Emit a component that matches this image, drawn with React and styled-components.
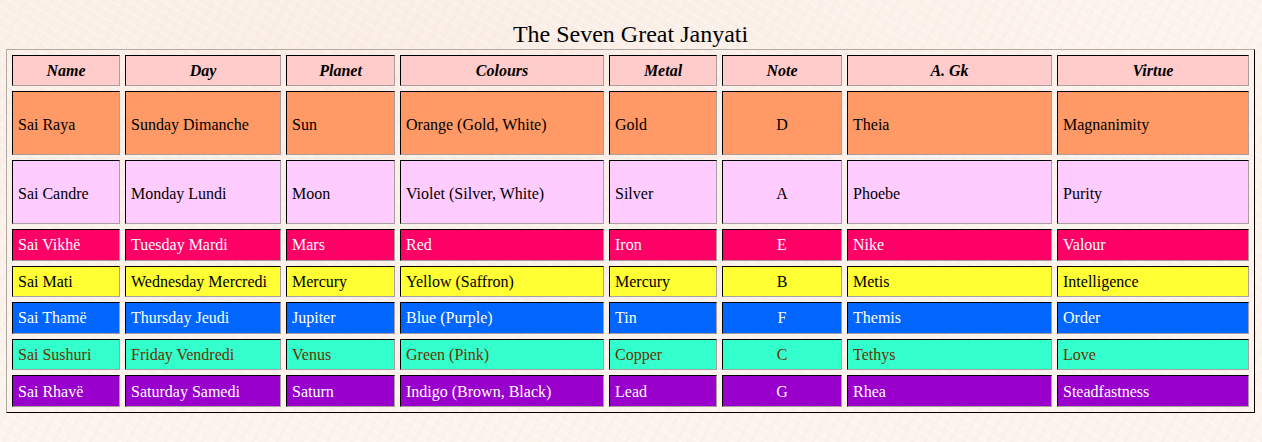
import React from "react";
import styled, { createGlobalStyle } from "styled-components";

const GlobalStyle = createGlobalStyle`
  html, body {
    margin: 0;
    padding: 0;
  }
  body {
    font-family: "Liberation Serif", "Times New Roman", serif;
    color: #000;
    background-color: #fcf3ec;
    background-image:
      repeating-linear-gradient(118deg, rgba(240, 214, 200, 0.09) 0 3px, transparent 3px 11px),
      repeating-linear-gradient(32deg, rgba(255, 255, 255, 0.25) 0 2px, transparent 2px 9px),
      radial-gradient(ellipse at 30% 20%, rgba(245, 225, 214, 0.35), transparent 60%);
    min-height: 442px;
  }
  * {
    box-sizing: border-box;
  }
`;

const Page = styled.div`
  padding: 20px 7px 0 6px;
`;

const Title = styled.h2`
  margin: 0 0 1px;
  font-size: 24px;
  font-weight: normal;
  line-height: 28px;
  text-align: center;
`;

const Table = styled.table`
  width: 100%;
  table-layout: fixed;
  border-collapse: separate;
  border-spacing: 5px;
  border: 1px solid;
  border-color: #b4aaa4 #000 #000 #b4aaa4;
`;

const HeadCell = styled.th`
  width: ${(p) => p.$w}px;
  height: 31px;
  padding: 1px 5px 0;
  background: #ffcccc;
  border: 1px solid;
  border-color: #000 #a8a0a0 #a8a0a0 #000;
  font-size: 16px;
  font-weight: bold;
  font-style: italic;
  text-align: center;
  vertical-align: middle;
`;

const Cell = styled.td`
  height: ${(p) => (p.$tall ? 64 : 31.6)}px;
  padding: ${(p) => (p.$tall ? "3px 5px 0" : "1px 5px 0")};
  background: ${(p) => p.$bg};
  color: ${(p) => p.$fg};
  border: 1px solid;
  border-color: #000 #a8a0a0 #a8a0a0 #000;
  font-size: 16px;
  text-align: ${(p) => (p.$center ? "center" : "left")};
  vertical-align: middle;
  white-space: nowrap;
`;

const columns = [
  { label: "Name", w: 108 },
  { label: "Day", w: 156 },
  { label: "Planet", w: 109 },
  { label: "Colours", w: 204 },
  { label: "Metal", w: 108 },
  { label: "Note", w: 120 },
  { label: "A. Gk", w: 205 },
  { label: "Virtue", w: 192 },
];

const rows = [
  {
    bg: "#ff9966", fg: "#000", tall: true,
    cells: ["Sai Raya", "Sunday Dimanche", "Sun", "Orange (Gold, White)", "Gold", "D", "Theia", "Magnanimity"],
  },
  {
    bg: "#ffccff", fg: "#000", tall: true,
    cells: ["Sai Candre", "Monday Lundi", "Moon", "Violet (Silver, White)", "Silver", "A", "Phoebe", "Purity"],
  },
  {
    bg: "#ff0066", fg: "#fff",
    cells: ["Sai Vikhë", "Tuesday Mardi", "Mars", "Red", "Iron", "E", "Nike", "Valour"],
  },
  {
    bg: "#ffff33", fg: "#000",
    cells: ["Sai Mati", "Wednesday Mercredi", "Mercury", "Yellow (Saffron)", "Mercury", "B", "Metis", "Intelligence"],
  },
  {
    bg: "#0066ff", fg: "#fff",
    cells: ["Sai Thamë", "Thursday Jeudi", "Jupiter", "Blue (Purple)", "Tin", "F", "Themis", "Order"],
  },
  {
    bg: "#33ffcc", fg: "#663300",
    cells: ["Sai Sushuri", "Friday Vendredi", "Venus", "Green (Pink)", "Copper", "C", "Tethys", "Love"],
  },
  {
    bg: "#9900cc", fg: "#fff",
    cells: ["Sai Rhavë", "Saturday Samedi", "Saturn", "Indigo (Brown, Black)", "Lead", "G", "Rhea", "Steadfastness"],
  },
];

const App = () => {
  return (
    <>
      <GlobalStyle />
      <Page>
        <Title>The Seven Great Janyati</Title>
        <Table>
          <thead>
            <tr>
              {columns.map((c) => (
                <HeadCell key={c.label} $w={c.w}>
                  {c.label}
                </HeadCell>
              ))}
            </tr>
          </thead>
          <tbody>
            {rows.map((r) => (
              <tr key={r.cells[0]}>
                {r.cells.map((text, i) => (
                  <Cell key={i} $bg={r.bg} $fg={r.fg} $tall={r.tall} $center={i === 5}>
                    {text}
                  </Cell>
                ))}
              </tr>
            ))}
          </tbody>
        </Table>
      </Page>
    </>
  );
};

export default App;
